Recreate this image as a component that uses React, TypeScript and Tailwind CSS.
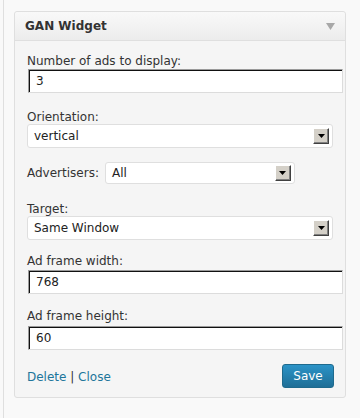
import React from "react";

const font = { fontFamily: '"DejaVu Sans", "Liberation Sans", sans-serif' };

function TextField({ label, value, labelGap }: { label: string; value: string; labelGap: string }) {
  return (
    <div>
      <div className="text-[12px] leading-[16px] text-[#333]">{label}</div>
      <input
        readOnly
        value={value}
        className={`${labelGap} ml-px block w-[315px] h-[24px] bg-white border-t border-l border-t-[#9a9a9a] border-l-[#9a9a9a] border-r border-b border-r-[#dcdcdc] border-b-[#dcdcdc] shadow-[inset_1px_1px_0_#111] pl-[7px] text-[12px] text-[#222] outline-none`}
        style={font}
      />
    </div>
  );
}

function ArrowButton() {
  return (
    <span className="flex items-center justify-center w-[16px] h-[16px] bg-[#d4d0c8] border-t border-l border-t-white border-l-white border-r border-b border-r-[#404040] border-b-[#404040] shadow-[inset_-1px_-1px_0_#808080]">
      <svg width="7" height="4" viewBox="0 0 7 4">
        <path d="M0 0h7L3.5 4z" fill="#000" />
      </svg>
    </span>
  );
}

function SelectBox({ value, width }: { value: string; width: string }) {
  return (
    <div
      className={`${width} h-[24px] flex items-center justify-between bg-white border border-[#dfdfdf] rounded-[3px] pl-[6px] pr-[3px] text-[12px] text-[#222]`}
    >
      <span>{value}</span>
      <ArrowButton />
    </div>
  );
}

export default function App() {
  return (
    <div className="w-[360px] h-[418px] bg-[#f9f9f9] flex overflow-hidden" style={font}>
      <div className="ml-[3px] w-px h-full bg-[#dfdfdf]" />

      {/* Widget box */}
      <div className="ml-[10px] mt-[11px] w-[332px] self-start border border-[#dfdfdf] rounded-[3px] bg-[#f5f5f5]">
        {/* Header */}
        <div className="h-[29px] flex items-center justify-between pl-[10px] pr-[10px] border-b border-[#dfdfdf] bg-gradient-to-b from-[#f9f9f9] to-[#ececec] rounded-t-[3px]">
          <span className="text-[12px] leading-[16px] font-bold text-[#333]">GAN Widget</span>
          <svg width="9" height="7" viewBox="0 0 9 7" className="mt-px">
            <path d="M0 0h9L4.5 7z" fill="#a8a8a8" />
          </svg>
        </div>

        {/* Body */}
        <div className="pl-[12px] pr-[11px] pt-[12px] pb-[9px]">
          <TextField label="Number of ads to display:" value="3" labelGap="mt-0" />

          <div className="mt-[16px]">
            <div className="text-[12px] leading-[16px] text-[#333]">Orientation:</div>
            <div className="-mt-px">
              <SelectBox value="vertical" width="w-[306px]" />
            </div>
          </div>

          <div className="mt-[14px] flex items-center gap-[6px]">
            <span className="text-[12px] leading-[16px] text-[#333]">Advertisers:</span>
            <div className="w-[190px] h-[22px] flex items-center justify-between bg-white border border-[#dfdfdf] rounded-[3px] pl-[6px] pr-[3px] text-[12px] text-[#222]">
              <span>All</span>
              <ArrowButton />
            </div>
          </div>

          <div className="mt-[17px]">
            <div className="text-[12px] leading-[16px] text-[#333]">Target:</div>
            <div className="-mt-px">
              <SelectBox value="Same Window" width="w-[306px]" />
            </div>
          </div>

          <div className="mt-[13px]">
            <TextField label="Ad frame width:" value="768" labelGap="mt-px" />
          </div>

          <div className="mt-[14px]">
            <TextField label="Ad frame height:" value="60" labelGap="mt-[2px]" />
          </div>

          <div className="mt-[14px] flex items-center justify-between">
            <div className="mt-[2px] text-[12px] leading-[16px] text-[#333]">
              <a className="text-[#21759b]">Delete</a> | <a className="text-[#21759b]">Close</a>
            </div>
            <button className="w-[52px] h-[24px] rounded-[3px] border border-[#1e6a8d] bg-gradient-to-b from-[#2b93c7] to-[#1f6f97] text-white text-[12px] leading-[16px]">
              Save
            </button>
          </div>
        </div>
      </div>
    </div>
  );
}
